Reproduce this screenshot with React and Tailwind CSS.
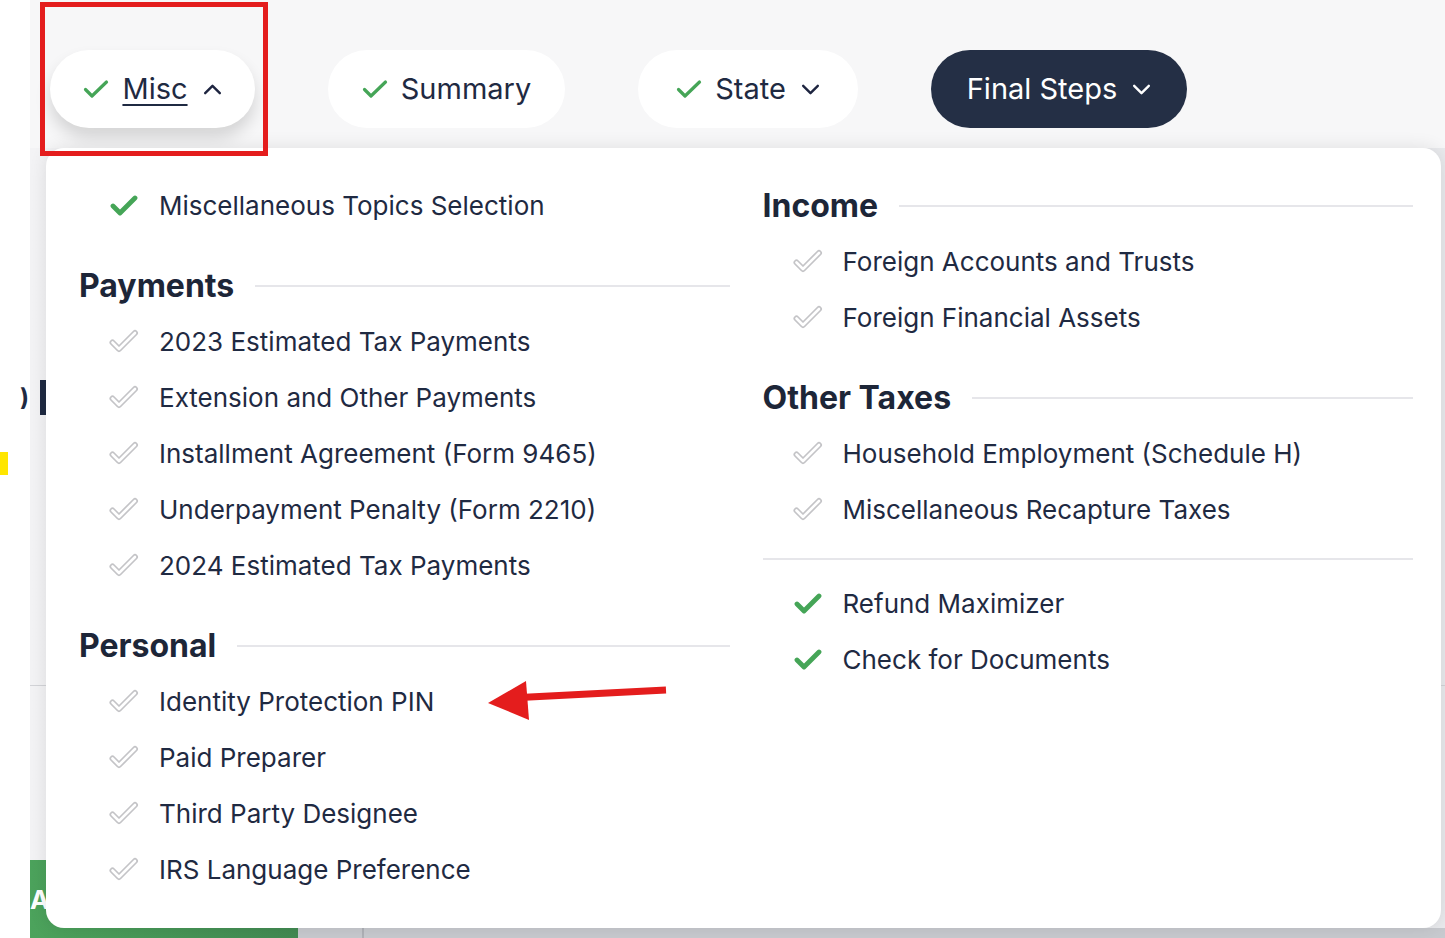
import React from "react";

const font = { fontFamily: "Inter, 'Noto Sans', sans-serif" };

function GreenCheck({ className = "" }) {
  return (
    <svg viewBox="0 0 30 22" className={className} width="30" height="22">
      <path d="M4 12 L11 19 L26 4" fill="none" stroke="#45a557" strokeWidth="4.8" strokeLinecap="round" strokeLinejoin="round" />
    </svg>
  );
}

function GrayCheck() {
  return (
    <svg viewBox="0 0 30 24" width="30" height="24">
      <path d="M3.5 13.5 L10 20 L26 4" fill="none" stroke="#c4c4c7" strokeWidth="6" strokeLinecap="round" strokeLinejoin="round" />
      <path d="M3.5 13.5 L10 20 L26 4" fill="none" stroke="#ffffff" strokeWidth="2.6" strokeLinecap="round" strokeLinejoin="round" />
    </svg>
  );
}

function NavCheck() {
  return (
    <svg viewBox="0 0 26 20" width="26" height="20">
      <path d="M2.5 10.5 L9 17 L23.5 3" fill="none" stroke="#45a557" strokeWidth="3.2" strokeLinecap="round" strokeLinejoin="round" />
    </svg>
  );
}

function Chevron({ up = false, color = "#1e2540" }) {
  return (
    <svg viewBox="0 0 20 12" width="19" height="11">
      <path d={up ? "M2 10 L10 2 L18 10" : "M2 2 L10 10 L18 2"} fill="none" stroke={color} strokeWidth="2.6" strokeLinecap="round" strokeLinejoin="round" />
    </svg>
  );
}

function Item({ label, done = false }) {
  return (
    <div className="flex items-center h-[56px] pl-[30px] gap-[20px]">
      <div className="w-[30px] flex justify-center">{done ? <GreenCheck /> : <GrayCheck />}</div>
      <span className="text-[26px] text-[#1f2a42]">{label}</span>
    </div>
  );
}

function Heading({ title, className = "" }) {
  return (
    <div className={`flex items-center h-[40px] gap-[21px] mb-[7px] ${className}`}>
      <span className="text-[32px] font-bold text-[#1d2638] leading-none">{title}</span>
      <div className="flex-1 h-[2px] bg-[#e6e6ea]" />
    </div>
  );
}

function Pill({ label, width, dark = false, active = false, chevron = null }) {
  return (
    <div
      className={`h-[78px] rounded-full flex items-center justify-center gap-[13px] ${width} ${
        dark ? "bg-[#242f45] text-white" : "bg-white text-[#1f2a42]"
      } ${active ? "shadow-[0_10px_16px_rgba(0,0,0,0.14)]" : ""}`}
    >
      {!dark && <NavCheck />}
      <span className={`text-[29px] ${active ? "underline underline-offset-[5px] decoration-2" : ""}`}>{label}</span>
      {chevron === "up" && <span className="ml-[2px]"><Chevron up /></span>}
      {chevron === "down" && <span className="ml-[2px]"><Chevron color={dark ? "#ffffff" : "#1e2540"} /></span>}
    </div>
  );
}

export default function App() {
  return (
    <div className="relative w-[1445px] h-[938px] overflow-hidden bg-white flex" style={font}>
      {/* left white strip */}
      <div className="w-[30px] flex flex-col">
        <div className="h-[383px]" />
        <div className="h-[30px] flex justify-end items-center pr-[1px] text-[#1f2a42] text-[24px] font-bold leading-none">
          <span>)</span>
        </div>
        <div className="h-[39px]" />
        <div className="w-[8px] h-[23px] bg-[#ffe600]" />
      </div>

      {/* main page */}
      <div className="flex-1 flex flex-col bg-[#f7f7f8]">
        <div className="h-[148px] flex items-start pt-[50px] pl-[20px] gap-[73px]">
          <Pill label="Misc" width="w-[205px]" active chevron="up" />
          <Pill label="Summary" width="w-[237px]" />
          <Pill label="State" width="w-[220px]" chevron="down" />
          <Pill label="Final Steps" width="w-[256px]" dark chevron="down" />
        </div>
        <div className="flex-1 flex flex-col bg-gradient-to-r from-[#f3f3f5] to-[#e9eaed]">
          <div className="h-[232px]" />
          <div className="ml-[10px] w-[6px] h-[35px] bg-[#1f2a42]" />
          <div className="h-[270px]" />
          <div className="h-px bg-[#d3d4d8]" />
          <div className="flex-1" />
          <div className="h-[78px] flex">
            <div className="w-[268px] bg-gradient-to-r from-[#4ca35c] to-[#428a52] flex items-center">
              <span className="text-white font-bold text-[26px]">A</span>
            </div>
            <div className="flex-1 flex flex-col justify-end">
              <div className="h-[10px] bg-[#c8cacf] flex">
                <div className="w-[64px]" />
                <div className="w-[2px] bg-[#b0b2b8]" />
              </div>
            </div>
          </div>
        </div>
      </div>

      {/* dropdown panel */}
      <div className="absolute left-[46px] top-[148px] w-[1395px] h-[780px] bg-white rounded-[18px] shadow-[0_0_18px_rgba(0,0,0,0.10)] pt-[29px] pl-[33px] pr-[28px]">
        <div className="grid grid-cols-2 gap-x-[33px]">
          <div className="flex flex-col">
            <Item label="Miscellaneous Topics Selection" done />
            <Heading title="Payments" className="mt-[33px]" />
            <Item label="2023 Estimated Tax Payments" />
            <Item label="Extension and Other Payments" />
            <Item label="Installment Agreement (Form 9465)" />
            <Item label="Underpayment Penalty (Form 2210)" />
            <Item label="2024 Estimated Tax Payments" />
            <Heading title="Personal" className="mt-[33px]" />
            <Item label="Identity Protection PIN" />
            <Item label="Paid Preparer" />
            <Item label="Third Party Designee" />
            <Item label="IRS Language Preference" />
          </div>
          <div className="flex flex-col">
            <Heading title="Income" className="mt-[9px]" />
            <Item label="Foreign Accounts and Trusts" />
            <Item label="Foreign Financial Assets" />
            <Heading title="Other Taxes" className="mt-[33px]" />
            <Item label="Household Employment (Schedule H)" />
            <Item label="Miscellaneous Recapture Taxes" />
            <div className="mt-[21px] h-[2px] bg-[#e6e6ea]" />
            <div className="mt-[15px]">
              <Item label="Refund Maximizer" done />
              <Item label="Check for Documents" done />
            </div>
          </div>
        </div>
      </div>

      {/* red annotation box */}
      <div className="absolute left-[40px] top-[2px] w-[228px] h-[154px] border-[5px] border-[#e41d1d]" />

      {/* red arrow */}
      <svg className="absolute left-[480px] top-[670px]" width="200" height="60" viewBox="480 670 200 60">
        <line x1="520" y1="697.5" x2="666" y2="690" stroke="#e41d1d" strokeWidth="7" />
        <polygon points="488,703 526,681 529,720" fill="#e41d1d" />
      </svg>
    </div>
  );
}
